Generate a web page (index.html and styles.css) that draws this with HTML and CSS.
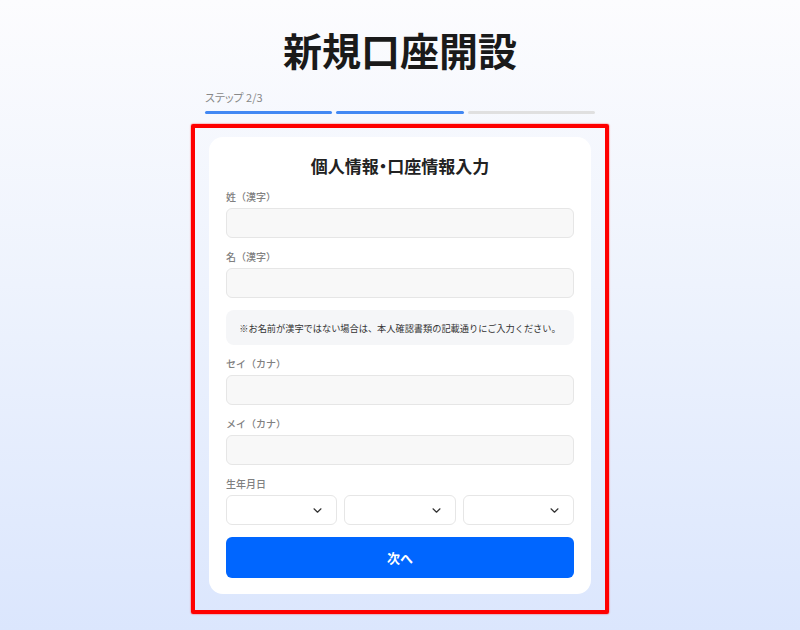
FILE: index.html
```html
<!DOCTYPE html>
<html lang="ja">
<head>
    <meta charset="UTF-8">
    <meta name="viewport" content="width=device-width, initial-scale=1.0">
    <title>新規口座開設</title>
    <link rel="stylesheet" href="styles.css">
</head>
<body>
    <div class="pagina">
        <h1 class="titulo">新規口座開設</h1>

        <div class="pasos">
            <p class="pasos-texto">ステップ 2/3</p>
            <div class="barras">
                <span class="barra activa"></span>
                <span class="barra activa"></span>
                <span class="barra"></span>
            </div>
        </div>

        <div class="marco">
            <form class="tarjeta">
                <h2>個人情報・口座情報入力</h2>

                <div class="campo">
                    <label>姓（漢字）</label>
                    <input class="entrada" type="text">
                </div>
                <div class="campo">
                    <label>名（漢字）</label>
                    <input class="entrada" type="text">
                </div>

                <p class="nota">※お名前が漢字ではない場合は、本人確認書類の記載通りにご入力ください。</p>

                <div class="campo">
                    <label>セイ（カナ）</label>
                    <input class="entrada" type="text">
                </div>
                <div class="campo">
                    <label>メイ（カナ）</label>
                    <input class="entrada" type="text">
                </div>

                <div class="campo">
                    <label>生年月日</label>
                    <div class="fecha">
                        <div class="selector">
                            <svg width="9" height="5" viewBox="0 0 9 5"><path d="M1 0.8l3.5 3.4 3.5-3.4" fill="none" stroke="#333" stroke-width="1.2" stroke-linecap="round" stroke-linejoin="round"/></svg>
                        </div>
                        <div class="selector">
                            <svg width="9" height="5" viewBox="0 0 9 5"><path d="M1 0.8l3.5 3.4 3.5-3.4" fill="none" stroke="#333" stroke-width="1.2" stroke-linecap="round" stroke-linejoin="round"/></svg>
                        </div>
                        <div class="selector">
                            <svg width="9" height="5" viewBox="0 0 9 5"><path d="M1 0.8l3.5 3.4 3.5-3.4" fill="none" stroke="#333" stroke-width="1.2" stroke-linecap="round" stroke-linejoin="round"/></svg>
                        </div>
                    </div>
                </div>

                <button class="boton" type="button">次へ</button>
            </form>
        </div>
    </div>
</body>
</html>
```

FILE: styles.css
```css
html, body {
    margin: 0;
    padding: 0;
}
body {
    font-family: "Noto Sans CJK JP", "Noto Sans", sans-serif;
    background: linear-gradient(180deg, #fcfcfe 0%, #eef3fd 45%, #dbe6fd 100%);
    min-height: 630px;
    color: #222;
}
.pagina {
    display: flex;
    flex-direction: column;
    align-items: center;
    padding-top: 26px;
}
.titulo {
    margin: 0;
    font-size: 39px;
    line-height: 46px;
    font-weight: 700;
    color: #1a1a1a;
}
.pasos {
    width: 390px;
    margin-top: 17px;
}
.pasos-texto {
    margin: 0;
    font-size: 11px;
    line-height: 16px;
    color: #888;
    font-feature-settings: "palt";
}
.barras {
    display: flex;
    gap: 4px;
    margin-top: 6px;
}
.barra {
    flex: 1;
    height: 3px;
    border-radius: 2px;
    background: #e0e0e0;
}
.barra.activa {
    background: #4288f3;
}
.marco {
    margin-top: 10px;
    border: 4px solid #ff0000;
    box-shadow: 0 0 1.5px #ff0000;
    border-radius: 2px;
    padding: 9px 14px 16px;
}
.tarjeta {
    width: 382px;
    box-sizing: border-box;
    background: white;
    border-radius: 14px;
    padding: 17px 17px 16px;
    display: flex;
    flex-direction: column;
    gap: 12px;
}
.tarjeta h2 {
    margin: 0;
    text-align: center;
    font-size: 17px;
    line-height: 24px;
    font-weight: 700;
    color: #222;
    font-feature-settings: "palt";
}
.campo {
    display: flex;
    flex-direction: column;
}
.campo label {
    font-size: 10px;
    line-height: 14px;
    font-weight: 500;
    color: #808080;
    margin-bottom: 4px;
}
.entrada {
    height: 30px;
    box-sizing: border-box;
    border: 1px solid #e6e6e6;
    border-radius: 6px;
    background: #f8f8f8;
    margin: 0;
    padding: 0 10px;
    font: inherit;
}
.nota {
    margin: 0;
    height: 35px;
    display: flex;
    align-items: center;
    justify-content: center;
    background: #f5f6f8;
    border-radius: 8px;
    font-size: 9.2px;
    color: #333;
}
.fecha {
    display: flex;
    gap: 7px;
}
.selector {
    flex: 1;
    height: 30px;
    box-sizing: border-box;
    border: 1px solid #e6e6e6;
    border-radius: 6px;
    background: white;
    display: flex;
    align-items: center;
    justify-content: flex-end;
    padding-right: 14px;
}
.boton {
    height: 41px;
    border: none;
    border-radius: 6px;
    background: #0066ff;
    color: white;
    font: inherit;
    font-size: 13px;
    font-weight: 700;
    cursor: pointer;
}
```
